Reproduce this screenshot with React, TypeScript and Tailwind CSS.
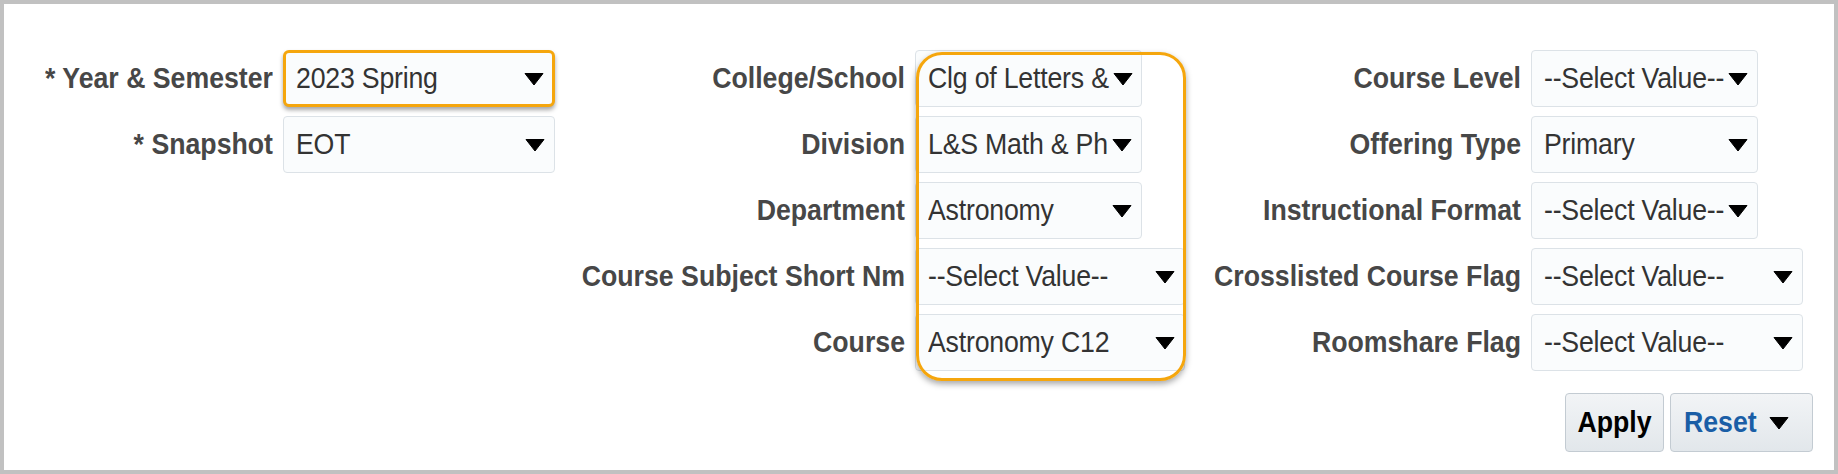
import React from "react";

const font = { fontFamily: '"Liberation Sans", Arial, sans-serif' };

function Arrow({ className = "" }: { className?: string }) {
  return (
    <svg width="20" height="14" viewBox="0 0 20 14" className={"shrink-0 " + className}>
      <path d="M1 1.5 H19 L10 13 Z" fill="#000" stroke="#000" strokeWidth="1" strokeLinejoin="round" />
    </svg>
  );
}

type SelectProps = { value: string; width: string; focused?: boolean };

function Select({ value, width, focused }: SelectProps) {
  const base = focused
    ? "border-[3px] border-[#f5a60d] rounded-[6px] shadow-[0_3px_4px_rgba(0,0,0,0.35)] pl-[10px] pr-[8px]"
    : "border border-[#dce2e7] rounded-[4px] pl-[12px] pr-[9px]";
  return (
    <div className={`${width} h-full flex items-center justify-between bg-[#fafcfd] ${base}`}>
      <span className="inline-block scale-y-[1.08] whitespace-nowrap text-[#333333] text-[26.7px] leading-normal tracking-[-0.2px]">
        {value}
      </span>
      <Arrow className="ml-[4px]" />
    </div>
  );
}

function Label({ children }: { children: React.ReactNode }) {
  return (
    <div className="h-full flex items-center justify-end whitespace-nowrap font-bold text-[26.7px] text-[#474747]">
      <span className="inline-block scale-y-[1.08]">{children}</span>
    </div>
  );
}

export default function App() {
  return (
    <div style={font} className="relative w-[1838px] h-[474px] border-4 border-[#c1c1c1] bg-white">
      <div className="flex pt-[46px] pl-[39px]">
        {/* column 1 */}
        <div className="grid grid-cols-[230px_272px] gap-x-[10px] gap-y-[9px] auto-rows-[57px] self-start">
          <Label>* Year &amp; Semester</Label>
          <Select value="2023 Spring" width="w-[272px]" focused />
          <Label>* Snapshot</Label>
          <Select value="EOT" width="w-[272px]" />
        </div>

        {/* column 2 */}
        <div className="ml-[24px] grid grid-cols-[326px_270px] gap-x-[10px] gap-y-[9px] auto-rows-[57px]">
          <Label>College/School</Label>
          <Select value="Clg of Letters &" width="w-[227px]" />
          <Label>Division</Label>
          <Select value="L&S Math & Ph" width="w-[227px]" />
          <Label>Department</Label>
          <Select value="Astronomy" width="w-[227px]" />
          <Label>Course Subject Short Nm</Label>
          <Select value="--Select Value--" width="w-[270px]" />
          <Label>Course</Label>
          <Select value="Astronomy C12" width="w-[270px]" />
        </div>

        {/* column 3 */}
        <div className="ml-[27px] grid grid-cols-[309px_272px] gap-x-[10px] gap-y-[9px] auto-rows-[57px]">
          <Label>Course Level</Label>
          <Select value="--Select Value--" width="w-[227px]" />
          <Label>Offering Type</Label>
          <Select value="Primary" width="w-[227px]" />
          <Label>Instructional Format</Label>
          <Select value="--Select Value--" width="w-[227px]" />
          <Label>Crosslisted Course Flag</Label>
          <Select value="--Select Value--" width="w-[272px]" />
          <Label>Roomshare Flag</Label>
          <Select value="--Select Value--" width="w-[272px]" />
        </div>
      </div>

      <div className="flex justify-end gap-[6px] mt-[22px] pr-[21px]">
        <button className="w-[99px] h-[59px] flex items-center justify-center rounded-[4px] border border-[#c3cbd2] bg-gradient-to-b from-[#f2f4f6] to-[#e2e7eb] font-bold text-[26.7px] text-black">
          <span className="inline-block scale-y-[1.08]">Apply</span>
        </button>
        <button className="w-[143px] h-[59px] flex items-center pl-[13px] pr-[25px] gap-[12px] rounded-[4px] border border-[#c3cbd2] bg-gradient-to-b from-[#f2f4f6] to-[#e2e7eb] font-bold text-[26.7px] text-[#1a5ea6]">
          <span className="inline-block scale-y-[1.08]">Reset</span>
          <Arrow />
        </button>
      </div>

      {/* highlight annotation */}
      <div className="absolute left-[912px] top-[48px] w-[270px] h-[329px] rounded-[26px] border-[3px] border-[#f5a60d] shadow-[0_3px_6px_rgba(0,0,0,0.35)] pointer-events-none" />
    </div>
  );
}
